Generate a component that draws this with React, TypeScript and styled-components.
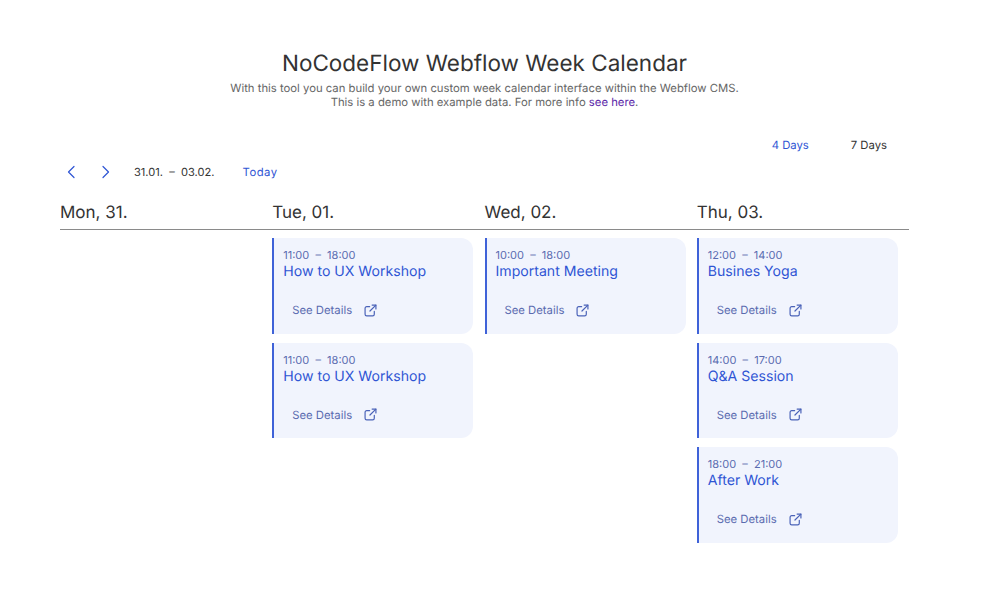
import React from "react";
import styled, {createGlobalStyle} from "styled-components";

const GlobalStyle = createGlobalStyle`
    html, body {
        margin: 0;
        padding: 0;
        background: #fff;
        font-family: Inter, "Liberation Sans", sans-serif;
        text-rendering: geometricPrecision;
    }
`;

const Page = styled.div`
    width: 1005px;
    height: 605px;
    box-sizing: border-box;
    padding: 49px 96px 0 60px;
    overflow: hidden;
`;

const Header = styled.header`
    text-align: center;
`;

const Title = styled.h1`
    margin: 0;
    font-size: 22.5px;
    line-height: 30px;
    font-weight: 400;
    color: #333;
`;

const Intro = styled.p`
    margin: 2px 0 0;
    font-size: 11.3px;
    line-height: 14px;
    color: #666;
`;

const IntroLink = styled.a`
    color: #5a1fa8;
`;

const ViewSwitch = styled.div`
    display: flex;
    justify-content: flex-end;
    gap: 42px;
    margin-top: 28px;
    padding-right: 22px;
`;

const ViewOption = styled.span<{ $active?: boolean }>`
    font-size: 11.3px;
    line-height: 16px;
    color: ${props => props.$active ? "#2f55d4" : "#333"};
`;

const Toolbar = styled.div`
    display: flex;
    align-items: center;
    margin-top: 11px;
    height: 16px;
    padding-left: 5px;
`;

const ArrowButton = styled.span`
    display: flex;
    width: 12px;
    margin-right: 22px;
    color: #2f55d4;

    & + & {
        margin-left: 1px;
    }
`;

const DateRange = styled.span`
    font-size: 11.1px;
    color: #333;
    white-space: pre;
`;

const TodayButton = styled.span`
    margin-left: 28px;
    font-size: 11.3px;
    letter-spacing: 0.5px;
    color: #2f55d4;
`;

const WeekGrid = styled.div`
    display: grid;
    grid-template-columns: repeat(4, 1fr);
    margin-top: 21px;
`;

const DayHead = styled.div`
    height: 29px;
    box-sizing: border-box;
    border-bottom: 1px solid #8a8a8a;
    font-size: 17px;
    line-height: 24px;
    color: #333;
`;

const DayColumn = styled.div`
    display: flex;
    flex-direction: column;
    gap: 9px;
    padding-top: 8px;
    min-height: 10px;
`;

const Card = styled.div`
    width: 201px;
    height: 95.7px;
    box-sizing: border-box;
    padding: 10px 10px 0 9px;
    border-left: 2px solid #3f62d8;
    border-radius: 0 12px 12px 0;
    background: #f1f4fd;
`;

const Time = styled.div`
    font-size: 11px;
    line-height: 14px;
    color: #5a6bb0;
    white-space: pre;
`;

const CardTitle = styled.div`
    font-size: 14.1px;
    line-height: 20px;
    color: #2f55d4;
`;

const DetailsRow = styled.div`
    display: flex;
    align-items: center;
    gap: 12px;
    margin-top: 20px;
    padding-left: 9px;
    font-size: 11.3px;
    line-height: 16px;
    color: #5a6bb0;
`;

const ExternalIcon = () => (
    <svg width="13" height="13" viewBox="0 0 12 12" fill="none" stroke="#4a62b8" strokeWidth="1.1" strokeLinecap="round" strokeLinejoin="round">
        <path d="M9.5 6.8v2.7a1.5 1.5 0 0 1-1.5 1.5H2.5A1.5 1.5 0 0 1 1 9.5V4a1.5 1.5 0 0 1 1.5-1.5H5.2"/>
        <path d="M7.5 1H11v3.5"/>
        <path d="M11 1 5.5 6.5"/>
    </svg>
);

const Chevron = ({left}: { left?: boolean }) => (
    <svg width="12" height="14" viewBox="0 0 12 14" fill="none" stroke="currentColor" strokeWidth="1.2" strokeLinecap="round" strokeLinejoin="round">
        <path d={left ? "M9 1.5 3.5 7 9 12.5" : "M3 1.5 8.5 7 3 12.5"}/>
    </svg>
);

type Item = { time: string, title: string };

const days: { label: string, items: Item[] }[] = [
    {label: "Mon, 31.", items: []},
    {
        label: "Tue, 01.",
        items: [
            {time: "11:00  –  18:00", title: "How to UX Workshop"},
            {time: "11:00  –  18:00", title: "How to UX Workshop"},
        ],
    },
    {
        label: "Wed, 02.",
        items: [{time: "10:00  –  18:00", title: "Important Meeting"}],
    },
    {
        label: "Thu, 03.",
        items: [
            {time: "12:00  –  14:00", title: "Busines Yoga"},
            {time: "14:00  –  17:00", title: "Q&A Session"},
            {time: "18:00  –  21:00", title: "After Work"},
        ],
    },
];

const App: React.FC = () => (
    <Page>
        <GlobalStyle/>
        <Header>
            <Title>NoCodeFlow Webflow Week Calendar</Title>
            <Intro>
                With this tool you can build your own custom week calendar interface within the Webflow CMS.<br/>
                This is a demo with example data. For more info <IntroLink>see here</IntroLink>.
            </Intro>
        </Header>
        <ViewSwitch>
            <ViewOption $active>4 Days</ViewOption>
            <ViewOption>7 Days</ViewOption>
        </ViewSwitch>
        <Toolbar>
            <ArrowButton><Chevron left/></ArrowButton>
            <ArrowButton><Chevron/></ArrowButton>
            <DateRange>31.01.  –  03.02.</DateRange>
            <TodayButton>Today</TodayButton>
        </Toolbar>
        <WeekGrid>
            {days.map(day => <DayHead key={day.label}>{day.label}</DayHead>)}
            {days.map(day => (
                <DayColumn key={day.label}>
                    {day.items.map((item, i) => (
                        <Card key={i}>
                            <Time>{item.time}</Time>
                            <CardTitle>{item.title}</CardTitle>
                            <DetailsRow>See Details <ExternalIcon/></DetailsRow>
                        </Card>
                    ))}
                </DayColumn>
            ))}
        </WeekGrid>
    </Page>
);

export default App;
